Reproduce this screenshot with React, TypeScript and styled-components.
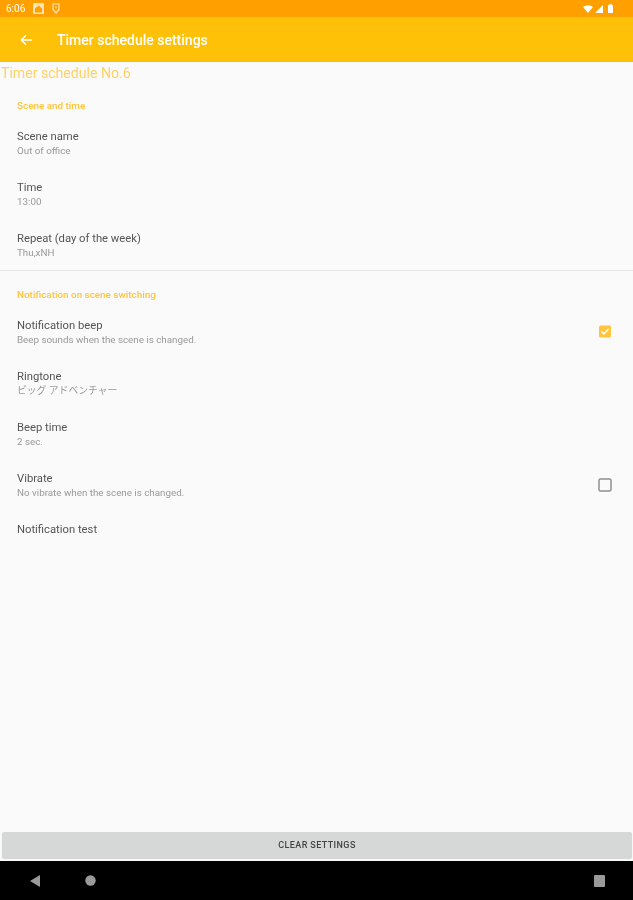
import React from "react";
import styled, { createGlobalStyle } from "styled-components";

const GlobalStyle = createGlobalStyle`
  html, body {
    margin: 0;
    padding: 0;
    background: #fafafa;
  }
  body {
    font-family: Roboto, "Noto Sans CJK JP", sans-serif;
  }
`;

const Screen = styled.div`
  width: 633px;
  height: 900px;
  display: flex;
  flex-direction: column;
  overflow: hidden;
  background: #fafafa;
  filter: blur(0.5px);
`;

const StatusBar = styled.div`
  height: 17px;
  flex: none;
  display: flex;
  align-items: center;
  padding: 0 20px 0 6px;
  background: #ffa000;
  color: #fff;
  font-size: 10px;
`;

const StatusLeft = styled.div`
  display: flex;
  align-items: center;
  gap: 8px;
`;

const StatusRight = styled.div`
  margin-left: auto;
  display: flex;
  align-items: center;
  gap: 2px;
`;

const Battery = styled.svg`
  display: block;
  margin-left: 3px;
`;

const Toolbar = styled.div`
  height: 45px;
  flex: none;
  display: flex;
  align-items: center;
  gap: 25px;
  padding: 1px 20px 0;
  box-sizing: border-box;
  background: #ffc107;
  color: #fff;
  font-size: 14px;
  font-weight: 500;
`;

const Content = styled.div`
  flex: 1;
  display: flex;
  flex-direction: column;
`;

const PageTitle = styled.div`
  height: 22px;
  line-height: 22px;
  padding-left: 1px;
  font-size: 14.1px;
  color: #ffd166;
`;

const SectionHeader = styled.div<{ $height: number; $top: number }>`
  height: ${(p) => p.$height}px;
  box-sizing: border-box;
  padding: ${(p) => p.$top}px 0 0 17px;
  display: flex;
  align-items: center;
  font-size: 9.9px;
  font-weight: 500;
  color: #ffc53d;
`;

const Divider = styled.div`
  height: 1px;
  background: #e4e4e4;
`;

const Row = styled.div<{ $height?: number }>`
  height: ${(p) => p.$height ?? 51}px;
  box-sizing: border-box;
  flex: none;
  display: flex;
  align-items: flex-start;
  justify-content: space-between;
  padding: 12px 21px 0 17px;
`;

const RowText = styled.div`
  display: flex;
  flex-direction: column;
  gap: 2px;
`;

const RowTitle = styled.div`
  font-size: 11.25px;
  line-height: 13px;
  color: #555;
`;

const RowSub = styled.div`
  font-size: 9.8px;
  line-height: 11px;
  color: #999;
`;

const ClearButton = styled.button`
  flex: none;
  height: 26px;
  margin: 0 1px 3px 2px;
  padding: 0;
  border: none;
  border-radius: 2px;
  background: #d6d7d7;
  box-shadow: 0 1px 1px rgba(0, 0, 0, 0.15);
  color: #444;
  font-family: inherit;
  font-size: 9px;
  font-weight: 500;
  letter-spacing: 0.4px;
`;

const NavBar = styled.div`
  height: 39px;
  flex: none;
  display: flex;
  align-items: center;
  padding: 0 28px 0 29px;
  background: #000;
`;

const NavIcon = styled.svg<{ $push?: boolean }>`
  display: block;
  margin-left: ${(p) => (p.$push ? "auto" : "0")};
`;

const BackNav = styled(NavIcon)`
  margin-right: 44px;
`;

const Icon = styled.svg`
  display: block;
`;

const CheckIcon = styled(Icon)`
  margin-top: 6px;
`;

function Checkbox({ checked }: { checked: boolean }) {
  return checked ? (
    <CheckIcon width="14" height="14" viewBox="0 0 14 14">
      <rect x="1" y="0.5" width="12" height="12" rx="1.5" fill="#ffc53d" />
      <path d="M3.5 6.5l2.4 2.4 4.6-4.8" fill="none" stroke="#fff" strokeWidth="1.5" />
    </CheckIcon>
  ) : (
    <CheckIcon width="14" height="14" viewBox="0 0 14 14">
      <rect x="1" y="1" width="12" height="12" rx="1.5" fill="none" stroke="#909090" strokeWidth="1.5" />
    </CheckIcon>
  );
}

const basicRows = [
  { title: "Scene name", sub: "Out of office" },
  { title: "Time", sub: "13:00" },
  { title: "Repeat (day of the week)", sub: "Thu,xNH", height: 50 },
];

const notifyRows = [
  { title: "Notification beep", sub: "Beep sounds when the scene is changed.", checked: true },
  { title: "Ringtone", sub: "ビッグ アドベンチャー" },
  { title: "Beep time", sub: "2 sec." },
  { title: "Vibrate", sub: "No vibrate when the scene is changed.", checked: false },
];

function App() {
  return (
    <Screen>
      <GlobalStyle />
      <StatusBar>
        <StatusLeft>
          <span>6:06</span>
          <Icon width="11" height="11" viewBox="0 0 11 11">
            <rect x="0" y="0" width="11" height="11" rx="1" fill="#ffe3b0" />
            <path d="M2 9.5V5.5L5.5 2.5 9 5.5v4z" fill="#ffa000" />
          </Icon>
          <Icon width="8" height="11" viewBox="0 0 8 11">
            <path d="M1 1h6v5.5L4 10 1 6.5z" fill="none" stroke="#ffe3b0" strokeWidth="1.2" />
            <circle cx="4" cy="4.5" r="1" fill="#ffe3b0" />
          </Icon>
        </StatusLeft>
        <StatusRight>
          <Icon width="10" height="8" viewBox="0 0 10 8">
            <path d="M0 2Q5-1.4 10 2L5 8z" fill="#fff" />
          </Icon>
          <Icon width="8" height="8" viewBox="0 0 8 8">
            <path d="M0 8L8 0v8z" fill="#fff" />
          </Icon>
          <Battery width="5" height="9" viewBox="0 0 5 9">
            <path d="M1.5 0h2v1H5v8H0V1h1.5z" fill="#fff" />
          </Battery>
        </StatusRight>
      </StatusBar>
      <Toolbar>
        <Icon width="12" height="12" viewBox="0 0 12 12">
          <path d="M12 6H1.5M6 1.2L1.2 6 6 10.8" fill="none" stroke="#fff" strokeWidth="1.4" />
        </Icon>
        <span>Timer schedule settings</span>
      </Toolbar>
      <Content>
        <PageTitle>Timer schedule No.6</PageTitle>
        <SectionHeader $height={34} $top={8}>
          Scene and time
        </SectionHeader>
        {basicRows.map((r) => (
          <Row key={r.title} $height={r.height}>
            <RowText>
              <RowTitle>{r.title}</RowTitle>
              <RowSub>{r.sub}</RowSub>
            </RowText>
          </Row>
        ))}
        <Divider />
        <SectionHeader $height={36} $top={10}>
          Notification on scene switching
        </SectionHeader>
        {notifyRows.map((r) => (
          <Row key={r.title}>
            <RowText>
              <RowTitle>{r.title}</RowTitle>
              <RowSub>{r.sub}</RowSub>
            </RowText>
            {r.checked !== undefined && <Checkbox checked={r.checked} />}
          </Row>
        ))}
        <Row $height={36}>
          <RowTitle>Notification test</RowTitle>
        </Row>
      </Content>
      <ClearButton>CLEAR SETTINGS</ClearButton>
      <NavBar>
        <BackNav width="12" height="12" viewBox="0 0 12 12">
          <path d="M11 0v12L1 6z" fill="#9a9a9a" />
        </BackNav>
        <NavIcon width="11" height="11" viewBox="0 0 11 11">
          <circle cx="5.5" cy="5.5" r="5.2" fill="#9a9a9a" />
        </NavIcon>
        <NavIcon $push width="11" height="12" viewBox="0 0 11 12">
          <rect x="0" y="0" width="11" height="12" rx="1" fill="#9a9a9a" />
        </NavIcon>
      </NavBar>
    </Screen>
  );
}

export default App;
